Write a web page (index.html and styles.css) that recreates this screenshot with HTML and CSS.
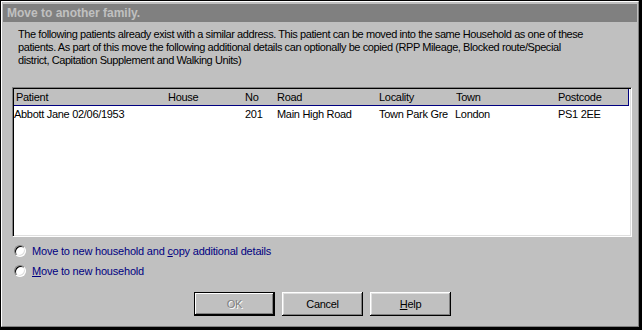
FILE: index.html
```html
<!DOCTYPE html>
<html lang="en">
<head>
  <meta charset="UTF-8">
  <title>Move to another family.</title>
  <link rel="stylesheet" href="styles.css">
</head>
<body>
  <div class="dialog">
    <div class="titlebar">Move to another family.</div>

    <div class="content">
      <p class="intro">
        The following patients already exist with a similar address. This patient can be moved into the same Household as one of these<br>
        patients. As part of this move the following additional details can optionally be copied (RPP Mileage, Blocked route/Special<br>
        district, Capitation Supplement and Walking Units)
      </p>

      <div class="listbox">
        <div class="row list-head">
          <span class="cell">Patient</span>
          <span class="cell">House</span>
          <span class="cell">No</span>
          <span class="cell">Road</span>
          <span class="cell">Locality</span>
          <span class="cell">Town</span>
          <span class="cell">Postcode</span>
        </div>
        <div class="row">
          <span class="cell first">Abbott Jane 02/06/1953</span>
          <span class="cell"></span>
          <span class="cell">201</span>
          <span class="cell">Main High Road</span>
          <span class="cell">Town Park Gre</span>
          <span class="cell town">London</span>
          <span class="cell">PS1 2EE</span>
        </div>
      </div>

      <div class="options">
        <label class="option"><span class="radio"></span><span>Move to new household and <u>c</u>opy additional details</span></label>
        <label class="option"><span class="radio"></span><span><u>M</u>ove to new household</span></label>
      </div>

      <div class="buttons">
        <button class="btn default" disabled>OK</button>
        <button class="btn">Cancel</button>
        <button class="btn"><u>H</u>elp</button>
      </div>
    </div>
  </div>
</body>
</html>
```

FILE: styles.css
```css
body {
  margin: 0;
  padding: 1px 0 0 1px;
  background: #000;
  font-family: "Liberation Sans", Arial, sans-serif;
  font-size: 11px;
  letter-spacing: -0.3px;
  color: #000;
}

.dialog {
  width: 638px;
  height: 326px;
  box-sizing: border-box;
  padding: 2px 1px;
  background: #c0c0c0;
  border: 1px solid;
  border-color: #fff #808080 #808080 #fff;
  display: flex;
  flex-direction: column;
}

.titlebar {
  height: 18px;
  line-height: 18px;
  padding-left: 4px;
  background: #808080;
  color: #c0c0c0;
  font-size: 12px;
  font-weight: bold;
  letter-spacing: 0;
}

.content {
  display: flex;
  flex-direction: column;
}

.intro {
  margin: 6px 0 0 0;
  padding-left: 15px;
  line-height: 13px;
  letter-spacing: -0.42px;
}

.listbox {
  margin: 20px 0 0 9px;
  width: 620px;
  height: 150px;
  box-sizing: border-box;
  background: #fff;
  border: 1px solid;
  border-color: #808080 #fff #fff #808080;
  box-shadow: inset 1px 1px #000, inset -1px -1px #dfdfdf;
  padding: 1px;
}

.row {
  display: grid;
  grid-template-columns: 152px 77px 32px 102px 77px 102px 72px;
  height: 16px;
  line-height: 16px;
  white-space: nowrap;
}

.list-head {
  width: 615px;
  box-sizing: border-box;
  background: #c0c0c0;
  border-right: 1px solid #000080;
  border-bottom: 1px solid #000080;
  height: 17px;
}

.cell {
  padding-left: 2px;
  overflow: hidden;
}

.cell.first {
  padding-left: 0;
}

.cell.town {
  padding-left: 1px;
}

.options {
  margin: 4px 0 0 11px;
  display: flex;
  flex-direction: column;
}

.option {
  display: flex;
  align-items: center;
  height: 20px;
  color: #000080;
  letter-spacing: -0.2px;
}

.radio {
  width: 10px;
  height: 10px;
  margin-right: 6px;
  border-radius: 50%;
  background: #fff;
  border: 1px solid;
  border-color: #808080 #fff #fff #808080;
  box-shadow: inset 1px 1px #000, inset -1px -1px #dfdfdf;
}

.buttons {
  margin: 11px 0 0 191px;
  display: flex;
  gap: 7px;
}

.btn {
  width: 81px;
  height: 24px;
  padding: 0;
  font-family: inherit;
  font-size: 11px;
  letter-spacing: -0.3px;
  color: #000;
  background: #c0c0c0;
  border: none;
  box-shadow: inset -1px -1px #000, inset 1px 1px #fff, inset -2px -2px #808080, inset 2px 2px #dfdfdf;
}

.btn.default {
  border: 1px solid #000;
  box-shadow: inset -1px -1px #000, inset 1px 1px #fff, inset -2px -2px #808080;
}

.btn:disabled {
  color: #808080;
  text-shadow: 1px 1px #fff;
}
```
